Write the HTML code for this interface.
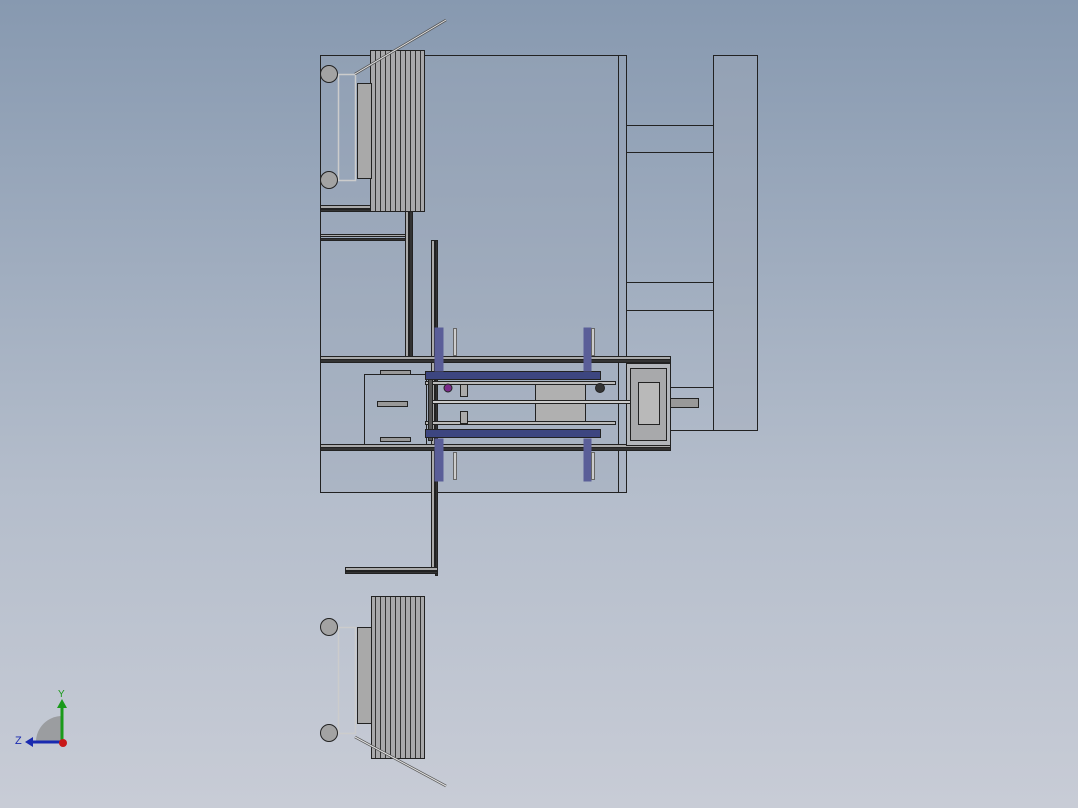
<!DOCTYPE html><html><head><style>html,body{margin:0;padding:0}body{width:1078px;height:808px;overflow:hidden;background:linear-gradient(#8799b0,#b4bdcb 60%,#c8ccd6)}svg{display:block}</style></head><body>
<svg width="1078" height="808" xmlns="http://www.w3.org/2000/svg" font-family="Liberation Sans, sans-serif">
<defs>
<pattern id="coil" width="5" height="10" patternUnits="userSpaceOnUse"><rect width="5" height="10" fill="#a9a9ab"/><line x1="0.5" y1="0" x2="0.5" y2="10" stroke="#333" stroke-width="1"/></pattern>
</defs>
<g fill="none" stroke="#222" stroke-width="1">
<rect x="320.5" y="55.5" width="306" height="437" fill="#9aa5b6" fill-opacity="0.35"/>
<line x1="618.5" y1="55" x2="618.5" y2="492"/>
<rect x="713.5" y="55.5" width="44" height="375" fill="#a4adbb" fill-opacity="0.3"/>
<rect x="626.5" y="125.5" width="87" height="27"/>
<rect x="626.5" y="282.5" width="87" height="28"/>
<rect x="670.5" y="387.5" width="43" height="43"/>
<rect x="320.5" y="205.5" width="94" height="3" fill="#aaa"/>
<rect x="320.5" y="209.5" width="94" height="2" fill="#333"/>
<rect x="320.5" y="234.5" width="89" height="2" fill="#aaa"/>
<rect x="320.5" y="238.5" width="89" height="2" fill="#333"/>
<rect x="405.5" y="209.5" width="3" height="150" fill="#aaa"/>
<rect x="409.5" y="209.5" width="3" height="150" fill="#333"/>
<rect x="431.5" y="240.5" width="3" height="330" fill="#aaa"/>
<rect x="435.5" y="240.5" width="2" height="335" fill="#333"/>
<rect x="345.5" y="567.5" width="92" height="3" fill="#aaa"/>
<rect x="345.5" y="571.5" width="92" height="2" fill="#333"/>
<rect x="320.5" y="356.5" width="350" height="3" fill="#aaa"/>
<rect x="320.5" y="359.5" width="350" height="3" fill="#333"/>
<rect x="320.5" y="444.5" width="350" height="3" fill="#aaa"/>
<rect x="320.5" y="447.5" width="350" height="3" fill="#333"/>
<rect x="364.5" y="374.5" width="62" height="70"/>
<rect x="626.5" y="363.5" width="44" height="82" fill="#b3b6bb"/>
<rect x="630.5" y="368.5" width="36" height="72" fill="#a8a9ab"/>
<rect x="638.5" y="382.5" width="21" height="42" fill="#b9b9b9"/>
<rect x="670.5" y="398.5" width="28" height="9" fill="#999"/>
<rect x="535.5" y="384.5" width="50" height="40" fill="#b0b0b0"/>
<rect x="425.5" y="381.5" width="190" height="3" fill="#bbb"/>
<rect x="430.5" y="400.5" width="200" height="3" fill="#ccc"/>
<rect x="425.5" y="421.5" width="190" height="3" fill="#bbb"/>
<rect x="428.5" y="378.5" width="4" height="62" fill="#555"/>
<rect x="377.5" y="401.5" width="30" height="5" fill="#999"/>
<rect x="380.5" y="437.5" width="30" height="4" fill="#999"/>
<rect x="380.5" y="370.5" width="30" height="4" fill="#999"/>
<rect x="460.5" y="384.5" width="7" height="12" fill="#aaa"/>
<rect x="460.5" y="411.5" width="7" height="12" fill="#aaa"/>
<rect x="425.5" y="371.5" width="175" height="8" fill="#3d4680"/>
<rect x="425.5" y="429.5" width="175" height="8" fill="#3d4680"/>
<rect x="434.5" y="327.5" width="9" height="44" fill="#5a5e98" stroke="none"/>
<rect x="434.5" y="438.5" width="9" height="43" fill="#5a5e98" stroke="none"/>
<rect x="583.5" y="327.5" width="8" height="44" fill="#5a5e98" stroke="none"/>
<rect x="583.5" y="438.5" width="8" height="43" fill="#5a5e98" stroke="none"/>
<rect x="453.5" y="328.5" width="3" height="27" fill="#ccc" stroke="#666"/>
<rect x="453.5" y="452.5" width="3" height="27" fill="#ccc" stroke="#666"/>
<rect x="591.5" y="328.5" width="3" height="27" fill="#ccc" stroke="#666"/>
<rect x="591.5" y="452.5" width="3" height="27" fill="#ccc" stroke="#666"/>
<circle cx="448" cy="388" r="4" fill="#7a2a8a"/>
<circle cx="600" cy="388" r="4.5" fill="#333"/>
<rect x="370.5" y="50.5" width="54" height="161" fill="url(#coil)"/>
<rect x="357.5" y="83.5" width="14" height="95" fill="#a9a9a9"/>
<rect x="338.5" y="74.5" width="17" height="106" stroke="#ccc" stroke-width="1.5"/>
<circle cx="329" cy="74" r="8.5" fill="#a3a3a3"/>
<circle cx="329" cy="180" r="8.5" fill="#a3a3a3"/>
<line x1="355" y1="74" x2="446" y2="20" stroke="#555" stroke-width="2.5"/>
<line x1="355" y1="74" x2="446" y2="20" stroke="#e4e4e4" stroke-width="1"/>
<rect x="371.5" y="596.5" width="53" height="162" fill="url(#coil)"/>
<rect x="357.5" y="627.5" width="14" height="96" fill="#a9a9a9"/>
<rect x="338.5" y="627.5" width="17" height="106" stroke="#ccc" stroke-width="1.5"/>
<circle cx="329" cy="627" r="8.5" fill="#a3a3a3"/>
<circle cx="329" cy="733" r="8.5" fill="#a3a3a3"/>
<line x1="355" y1="737" x2="446" y2="786" stroke="#555" stroke-width="2.5"/>
<line x1="355" y1="737" x2="446" y2="786" stroke="#e4e4e4" stroke-width="1"/>
</g>
<path d="M62 742 L36 742 A26 26 0 0 1 62 716 Z" fill="#8a8a8a" opacity="0.7"/>
<line x1="62" y1="742" x2="62" y2="706" stroke="#1a9a1a" stroke-width="3"/>
<polygon points="57,708 67,708 62,699" fill="#1a9a1a"/>
<line x1="62" y1="742" x2="32" y2="742" stroke="#1a2ab0" stroke-width="3"/>
<polygon points="33,737 33,747 25,742" fill="#1a2ab0"/>
<circle cx="63" cy="743" r="4" fill="#c81818"/>
<text x="58" y="697" font-size="10" fill="#1a9a1a">Y</text>
<text x="15" y="744" font-size="11" fill="#1a2ab0">Z</text>
</svg>
</body></html>
